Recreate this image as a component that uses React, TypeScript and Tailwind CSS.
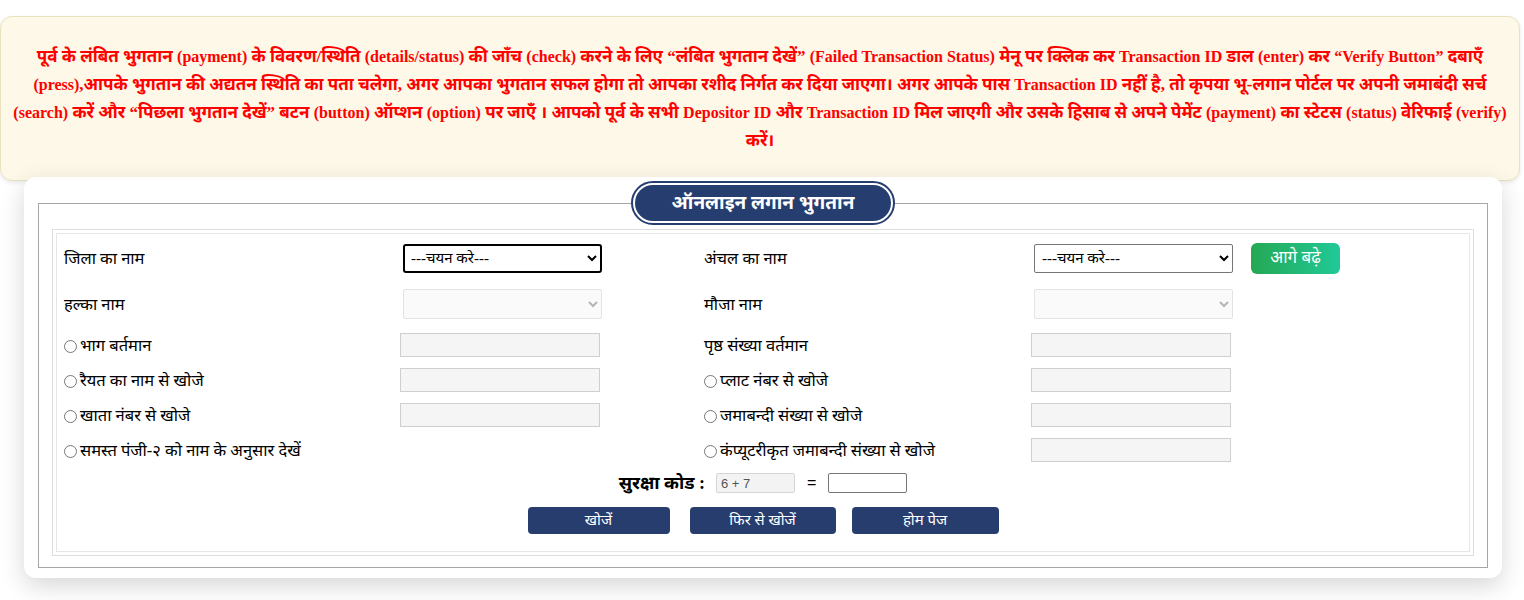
import { Fragment, useState } from 'react'

const serif = { fontFamily: '"Liberation Serif", "Noto Sans", serif' }
const sans = { fontFamily: '"Liberation Sans", Arial, sans-serif' }

// Latin runs in the notice are set a little smaller than the Devanagari text
function Mixed({ text }: { text: string }) {
  const parts = text.split(/([A-Za-z][A-Za-z ()/“”,.]*[A-Za-z)”]|\([A-Za-z/ ]+\)|“[^”]+”)/)
  return (
    <>
      {parts.map((p, i) =>
        /[A-Za-z]/.test(p) ? (
          <span key={i} className="text-[16px]">{p}</span>
        ) : (
          <Fragment key={i}>{p}</Fragment>
        ),
      )}
    </>
  )
}

const notice = [
  'पूर्व के लंबित भुगतान (payment) के विवरण/स्थिति (details/status) की जाँच (check) करने के लिए “लंबित भुगतान देखें” (Failed Transaction Status) मेनू पर क्लिक कर Transaction ID डाल (enter) कर “Verify Button” दबाएँ',
  '(press),आपके भुगतान की अद्यतन स्थिति का पता चलेगा, अगर आपका भुगतान सफल होगा तो आपका रशीद निर्गत कर दिया जाएगा। अगर आपके पास Transaction ID नहीं है, तो कृपया भू-लगान पोर्टल पर अपनी जमाबंदी सर्च',
  '(search) करें और “पिछला भुगतान देखें” बटन (button) ऑप्शन (option) पर जाएँ । आपको पूर्व के सभी Depositor ID और Transaction ID मिल जाएगी और उसके हिसाब से अपने पेमेंट (payment) का स्टेटस (status) वेरिफाई (verify)',
  'करें।',
]

function Radio({ name }: { name: string }) {
  return (
    <input
      type="radio"
      name={name}
      className="m-0 mr-[3px] h-[13px] w-[13px] shrink-0 accent-gray-500"
    />
  )
}

function TextBox() {
  return <input type="text" className="h-[24px] w-[200px] border border-[#cfcfcf] bg-[#f5f5f5] px-1 text-sm" />
}

interface Row {
  left: string
  leftRadio: boolean
  leftInput: boolean
  right: string
  rightRadio: boolean
}

const rows: Row[] = [
  { left: 'भाग बर्तमान', leftRadio: true, leftInput: true, right: 'पृष्ठ संख्या वर्तमान', rightRadio: false },
  { left: 'रैयत का नाम से खोजे', leftRadio: true, leftInput: true, right: 'प्लाट नंबर से खोजे', rightRadio: true },
  { left: 'खाता नंबर से खोजे', leftRadio: true, leftInput: true, right: 'जमाबन्दी संख्या से खोजे', rightRadio: true },
  { left: 'समस्त पंजी-२ को नाम के अनुसार देखें', leftRadio: true, leftInput: false, right: 'कंप्यूटरीकृत जमाबन्दी संख्या से खोजे', rightRadio: true },
]

export default function App() {
  const [answer, setAnswer] = useState('')

  return (
    <div className="min-h-[600px] bg-white pt-[16px] text-black" style={serif}>
      {/* notice banner */}
      <div className="mr-[4px] rounded-[12px] border border-[#e9e2bf] bg-[#fdf8e7] px-[10px] pb-[25px] pt-[26px] shadow-[0_2px_4px_rgba(0,0,0,0.08)]">
        <p className="whitespace-nowrap text-center text-[17px] font-bold leading-[28px] text-[#ff0000]">
          {notice.map((line, i) => (
            <Fragment key={i}>
              <Mixed text={line} />
              {i < notice.length - 1 && <br />}
            </Fragment>
          ))}
        </p>
      </div>

      {/* main card */}
      <div className="relative z-10 -mt-[4px] ml-[24px] mr-[22px] rounded-[12px] bg-white px-[14px] pb-[10px] pt-[4px] shadow-[0_8px_24px_rgba(0,0,0,0.16)]">
        <fieldset className="border border-[#a6a6a6] px-[13px] pb-[11px]">
          <legend className="mx-auto">
            <div className="rounded-full border-2 border-[#253d6f] bg-white p-[2px]">
              <div className="flex h-[36px] w-[256px] items-center justify-center rounded-full bg-[#253d6f] text-[19px] font-bold text-white">
                ऑनलाइन लगान भुगतान
              </div>
            </div>
          </legend>

          <div className="mt-[4px] border border-[#dedede] p-[3px]">
            <div className="border border-[#e6e6e6] pb-[17px] text-[16.5px]">
              {/* row 1 */}
              <div className="mt-[4px] grid h-[40px] grid-cols-[343px_304px_327px_220px_1fr] items-center">
                <span className="pl-[7px] pt-[3px]">जिला का नाम</span>
                <select className="ml-[3px] h-[29px] w-[199px] rounded-[3px] border-2 border-black bg-white pl-[2px] text-[15px]">
                  <option>---चयन करे---</option>
                </select>
                <span className="pt-[3px]">अंचल का नाम</span>
                <select className="ml-[3px] h-[29px] w-[199px] rounded-[2px] border border-[#767676] bg-white pl-[3px] text-[15px]">
                  <option>---चयन करे---</option>
                </select>
                <button type="button" className="h-[31px] w-[89px] rounded-[6px] bg-gradient-to-r from-[#25a853] to-[#20c997] text-[17px] text-white">
                  आगे बढ़े
                </button>
              </div>

              {/* row 2 */}
              <div className="mt-[6px] grid h-[40px] grid-cols-[343px_304px_327px_220px_1fr] items-center">
                <span className="pl-[7px] pt-[3px]">हल्का नाम</span>
                <select disabled className="ml-[3px] h-[30px] w-[199px] rounded-[2px] border border-[#e3e3e3] bg-[#fafafa] text-[#b5b5b5]" />
                <span className="pt-[3px]">मौजा नाम</span>
                <select disabled className="ml-[3px] h-[30px] w-[199px] rounded-[2px] border border-[#e3e3e3] bg-[#fafafa] text-[#b5b5b5]" />
              </div>

              {/* search rows */}
              <div className="mt-[3px]">
                {rows.map((r, i) => (
                  <div key={i} className="grid h-[35px] grid-cols-[343px_304px_327px_220px_1fr] items-center">
                    <label className="flex items-center pl-[7px] pt-[3px]">
                      {r.leftRadio && <Radio name="search" />}
                      {r.left}
                    </label>
                    <div>{r.leftInput && <TextBox />}</div>
                    <label className="flex items-center pt-[3px]">
                      {r.rightRadio && <Radio name="search" />}
                      {r.right}
                    </label>
                    <TextBox />
                  </div>
                ))}
              </div>

              {/* security code */}
              <div className="flex h-[32px] items-center justify-center">
                <span className="mr-[11px] text-[18px] font-bold">सुरक्षा कोड :</span>
                <input
                  readOnly
                  value="6 + 7"
                  className="h-[20px] w-[79px] rounded-[2px] border border-[#d6d6d6] bg-[#f3f3f3] px-[4px] text-[13px] text-[#555]"
                  style={sans}
                />
                <span className="mx-[12px] text-[16px]" style={sans}>=</span>
                <input
                  value={answer}
                  onChange={(e) => setAnswer(e.target.value)}
                  className="h-[20px] w-[79px] rounded-[2px] border border-[#767676] bg-white px-[4px] text-[13px]"
                />
              </div>

              {/* buttons */}
              <div className="mt-[8px] flex h-[27px] justify-center">
                <button type="button" className="w-[142px] rounded-[4px] bg-[#263d6e] text-[15px] text-white">खोजें</button>
                <button type="button" className="ml-[20px] w-[146px] rounded-[4px] bg-[#263d6e] text-[15px] text-white">फिर से खोजें</button>
                <button type="button" className="ml-[16px] w-[147px] rounded-[4px] bg-[#263d6e] text-[15px] text-white">होम पेज</button>
              </div>
            </div>
          </div>
        </fieldset>
      </div>
    </div>
  )
}
